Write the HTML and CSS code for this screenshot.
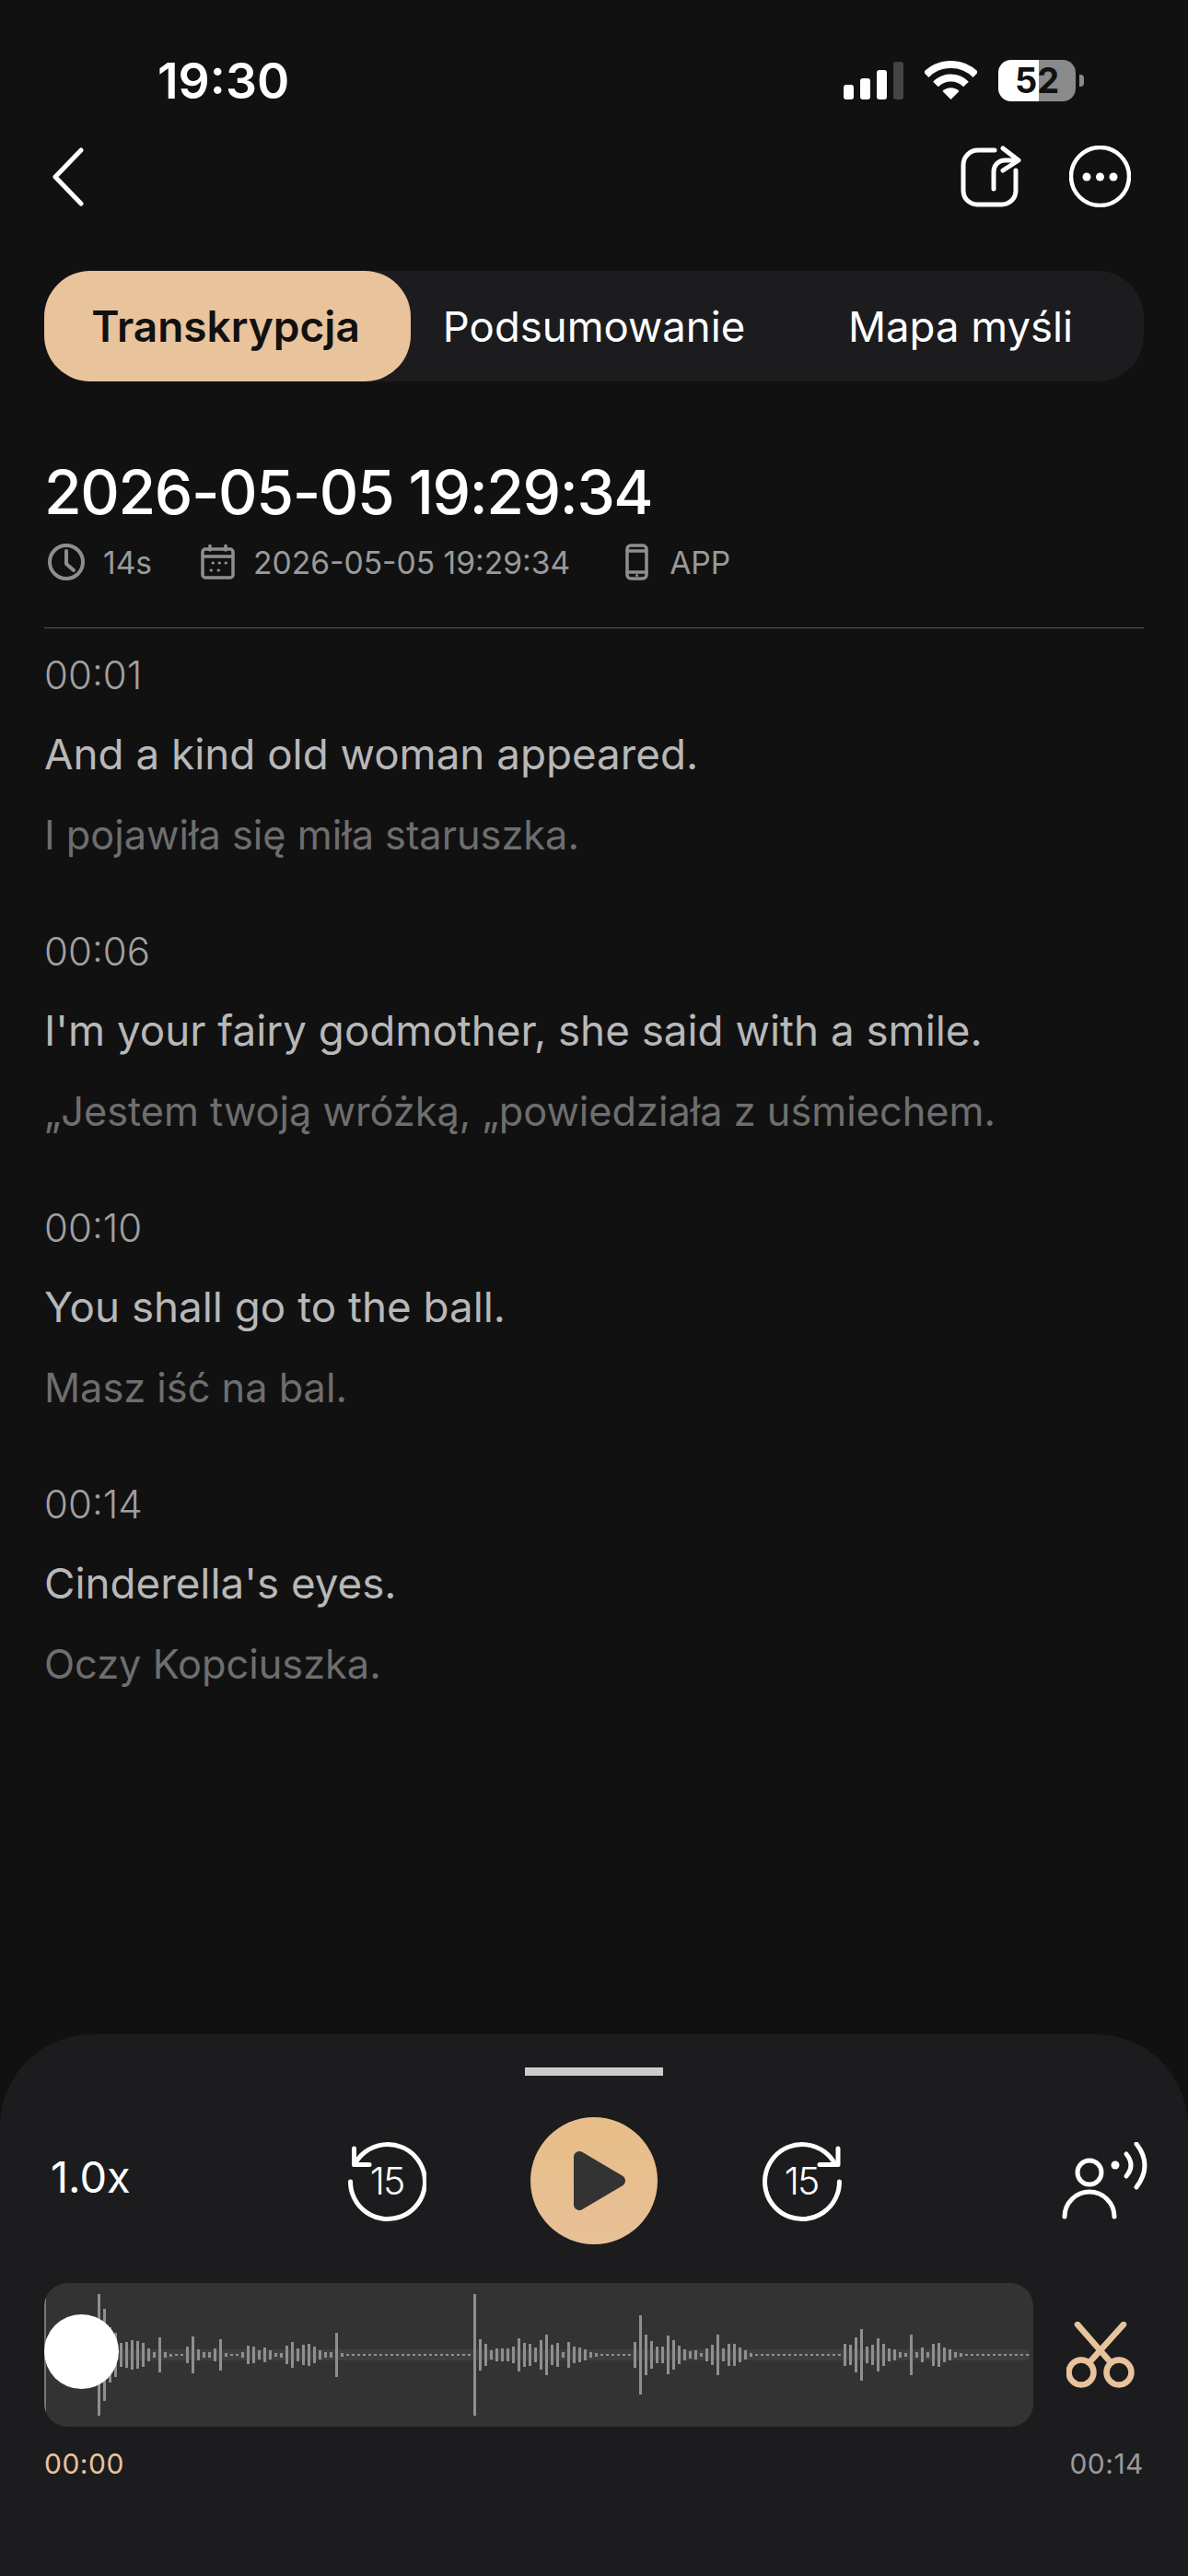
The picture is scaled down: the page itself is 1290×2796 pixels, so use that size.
FILE: index.html
```html
<!DOCTYPE html>
<html lang="pl">
<head>
  <meta charset="UTF-8">
  <title>Transkrypcja</title>
  <link rel="stylesheet" href="styles.css">
</head>
<body>

<div class="statusbar">
  <span class="clock">19:30</span>
  <div class="status-icons">
    <div class="signal">
      <i class="s1"></i><i class="s2"></i><i class="s3"></i><i class="s4"></i>
    </div>
    <svg class="wifi" width="57" height="42" viewBox="0 0 57 42">
      <path d="M1.6 15.1a38 38 0 0 1 53.8 0" fill="none" stroke="#fff" stroke-width="8"/>
      <path d="M12 25.5a23 23 0 0 1 33 0" fill="none" stroke="#fff" stroke-width="8"/>
      <path d="M19.5 33a12.700 12.700 0 0 1 18 0l-9 9z" fill="#fff"/>
    </svg>
    <div class="battery"><span>52</span></div>
    <div class="battery-nub"></div>
  </div>
</div>

<div class="topbar">
  <svg width="34" height="64" viewBox="0 0 34 64">
    <path d="M31 3L3 32l28 29" fill="none" stroke="#fff" stroke-width="5" stroke-linecap="round" stroke-linejoin="round"/>
  </svg>
  <div class="topbar-right">
    <svg width="67" height="67" viewBox="0 0 67 67" fill="none" stroke="#fff" stroke-width="5" stroke-linecap="round" stroke-linejoin="round">
      <path d="M38 5H20A16 16 0 0 0 4 21V49a15 15 0 0 0 15 15H46a15 15 0 0 0 15-15V27"/>
      <path d="M37 47V28a12 12 0 0 1 12-12H63"/>
      <path d="M47 3L64 16L47 27"/>
    </svg>
    <svg width="67" height="67" viewBox="0 0 67 67">
      <circle cx="33.500" cy="33.500" r="31.500" fill="none" stroke="#fff" stroke-width="4.500"/>
      <circle cx="19" cy="34" r="4.500" fill="#fff"/>
      <circle cx="33.500" cy="34" r="4.500" fill="#fff"/>
      <circle cx="48" cy="34" r="4.500" fill="#fff"/>
    </svg>
  </div>
</div>

<div class="tabs">
  <div class="tab active">Transkrypcja</div>
  <div class="tab">Podsumowanie</div>
  <div class="tab">Mapa myśli</div>
</div>

<h1 class="title">2026-05-05 19:29:34</h1>

<div class="meta">
  <svg class="ic-clock" width="40" height="40" viewBox="0 0 40 40" fill="none" stroke="#8e8e8e" stroke-width="4" stroke-linecap="round" stroke-linejoin="round">
    <circle cx="20" cy="20" r="18"/>
    <path d="M20 8V22L28 29"/>
  </svg>
  <span class="meta-dur">14s</span>
  <svg class="ic-cal" width="37" height="38" viewBox="0 0 37 38" fill="none" stroke="#8e8e8e" stroke-width="3.500" stroke-linecap="round">
    <rect x="2" y="5" width="33" height="31" rx="3"/>
    <path d="M2 13H35M10 1.500V6M27 1.500V6"/>
    <path d="M13 20h.5M20 20h.5M27 20h.5M11 28h.5M19 28h.5" stroke-width="3"/>
  </svg>
  <span class="meta-date">2026-05-05 19:29:34</span>
  <svg class="ic-phone" width="25" height="40" viewBox="0 0 25 40" fill="none" stroke="#8e8e8e" stroke-width="3.500" stroke-linecap="round">
    <rect x="2" y="2" width="21" height="36" rx="4"/>
    <path d="M2 8H23M2 31H23"/>
    <path d="M12.500 34.500h.1" stroke-width="3"/>
  </svg>
  <span class="meta-app">APP</span>
</div>

<div class="divider"></div>

<div class="transcript">
  <div class="item">
    <div class="ts">00:01</div>
    <div class="en">And a kind old woman appeared.</div>
    <div class="pl">I pojawiła się miła staruszka.</div>
  </div>
  <div class="item">
    <div class="ts">00:06</div>
    <div class="en">I'm your fairy godmother, she said with a smile.</div>
    <div class="pl">„Jestem twoją wróżką, „powiedziała z uśmiechem.</div>
  </div>
  <div class="item">
    <div class="ts">00:10</div>
    <div class="en">You shall go to the ball.</div>
    <div class="pl">Masz iść na bal.</div>
  </div>
  <div class="item">
    <div class="ts">00:14</div>
    <div class="en">Cinderella's eyes.</div>
    <div class="pl">Oczy Kopciuszka.</div>
  </div>
</div>

<div class="sheet">
  <div class="handle"></div>

  <div class="controls">
    <div class="speed">1.0x</div>
    <div class="transport">
      <svg width="88" height="90" viewBox="0 0 88 90" fill="none" stroke="#fff" stroke-width="5" stroke-linecap="round" stroke-linejoin="round">
        <path d="M5.500 46A40.500 40.500 0 1 0 10 27.500"/>
        <path d="M9.500 10V27.500H26"/>
        <text class="skip-num" x="45" y="60" text-anchor="middle">15</text>
      </svg>
      <div class="play">
        <svg width="138" height="138" viewBox="0 0 138 138">
          <polygon points="53,43 97,69 53,95" fill="#333" stroke="#333" stroke-width="12" stroke-linejoin="round"/>
        </svg>
      </div>
      <svg width="88" height="90" viewBox="0 0 88 90" fill="none" stroke="#fff" stroke-width="5" stroke-linecap="round" stroke-linejoin="round">
        <path d="M84.500 46A40.500 40.500 0 1 1 80 27.500"/>
        <path d="M83 10V27.500H63"/>
        <text class="skip-num" x="43" y="60" text-anchor="middle">15</text>
      </svg>
    </div>
    <svg class="voice" width="93" height="84" viewBox="0 0 93 84" fill="none" stroke="#fff" stroke-width="5" stroke-linecap="round">
      <circle cx="30" cy="33" r="13"/>
      <path d="M3 81a27 27 0 0 1 54 0"/>
      <circle cx="58" cy="25" r="4.500" fill="#fff" stroke="none"/>
      <path d="M70 13q10 12 0 24"/>
      <path d="M81 2q18 23 0 47"/>
    </svg>
  </div>

  <div class="wave-row">
    <div class="wave">
      <div class="band"></div>
      <div class="bars" id="bars"></div>
      <div class="playhead"></div>
      <div class="thumb"></div>
    </div>
    <svg width="74" height="72" viewBox="0 0 74 72" fill="none" stroke="#e8c39b" stroke-width="6.500" stroke-linecap="round">
      <circle cx="16" cy="55" r="13.500"/>
      <circle cx="57" cy="55" r="13.500"/>
      <path d="M12 3L47 43"/>
      <path d="M62 3L26 43"/>
    </svg>
  </div>

  <div class="times">
    <span class="now">00:00</span>
    <span>00:14</span>
  </div>
</div>

<script>
  // half heights of the waveform bars, 1 = flat dash
  function dashes(n) {
    return new Array(n).fill(1);
  }

  const samples = [
    66, 50, 30, 24, 13, 14, 16, 15, 13, 7, 3, 19, 3, 1.5, 1, 1,
    9, 20, 6, 3, 3, 7, 17, 2, 1, 1,
    3, 10, 9, 5, 8, 5, 2, 2.5, 10, 14, 7, 11, 12, 9, 5, 3, 3, 24, 2,
    ...dashes(23),
    66, 17, 12, 5, 7, 7, 7, 9, 18, 13, 12, 8, 16, 22, 11, 13, 3, 14, 9, 8, 6, 3, 2,
    ...dashes(6),
    14, 43, 22, 15, 9, 9, 21, 16, 10, 6, 4, 5, 2, 7, 11, 22, 7, 12, 12, 8, 5, 2,
    ...dashes(16),
    12, 11, 19, 28, 9, 11, 18, 12, 7, 6, 3, 2, 22, 3, 8, 3, 12, 13, 8, 6, 3, 2,
    ...dashes(12)
  ];

  const bars = document.getElementById("bars");
  samples.forEach(h => {
    const bar = document.createElement("span");
    bar.style.height = (h * 2) + "px";
    bars.appendChild(bar);
  });
</script>
</body>
</html>
```

FILE: styles.css
```css
* {
  box-sizing: border-box;
}

body {
  margin: 0;
  width: 1290px;
  height: 2796px;
  overflow: hidden;
  display: flex;
  flex-direction: column;
  background-color: #111112;
  color: #fff;
  font-family: Inter, "Noto Sans", sans-serif;
}

svg {
  display: block;
  flex-shrink: 0;
}

.statusbar {
  height: 46px;
  margin-top: 64px;
  padding: 0 113px 0 171px;
  display: flex;
  justify-content: space-between;
  align-items: center;
}

.clock {
  font-size: 53.500px;
  font-weight: 600;
}

.status-icons {
  display: flex;
  align-items: center;
}

.signal {
  display: flex;
  align-items: flex-end;
  gap: 7px;
  height: 41px;
  margin-right: 23px;
}

.signal i {
  width: 11px;
  background-color: #fff;
  border-radius: 3px;
}

.signal .s1 { height: 16px; }
.signal .s2 { height: 23px; }
.signal .s3 { height: 32px; }
.signal .s4 { height: 41px; background-color: #444; }

.wifi {
  margin-right: 23px;
}

.battery {
  width: 84px;
  height: 45px;
  border-radius: 14px;
  background: linear-gradient(90deg, #fff 52.500%, #8a8a8a 52.500%);
  display: flex;
  justify-content: center;
  align-items: center;
  color: #111;
  font-size: 38px;
  font-weight: 700;
}

.battery-nub {
  width: 5px;
  height: 13px;
  margin-left: 4px;
  background-color: #8a8a8a;
  border-radius: 0 4px 4px 0;
}

.topbar {
  margin-top: 48px;
  padding: 0 62px 0 57px;
  height: 67px;
  display: flex;
  justify-content: space-between;
  align-items: center;
}

.topbar-right {
  display: flex;
  gap: 52px;
}

.tabs {
  margin: 69px 48px 0;
  height: 120px;
  display: grid;
  grid-template-columns: repeat(3, 1fr);
  background-color: #1c1c1f;
  border-radius: 50px;
}

.tab {
  display: flex;
  justify-content: center;
  align-items: center;
  font-size: 45.500px;
  border-radius: 50px;
}

.tab.active {
  padding-right: 4px;
  background-color: #e8c39b;
  color: #111;
  font-size: 46px;
  font-weight: 600;
}

.title {
  margin: 74px 48px 0;
  font-size: 66px;
  font-weight: 500;
  line-height: 92px;
  letter-spacing: -1.4px;
}

.meta {
  margin: 10px 48px 0 52px;
  height: 40px;
  display: flex;
  align-items: center;
  color: #9a9a9a;
  font-size: 33.600px;
}

.meta-dur { margin-left: 20px; }
.ic-cal { margin-left: 53px; }
.meta-date { margin-left: 20px; }
.ic-phone { margin-left: 60px; }
.meta-app { margin-left: 23px; }

.divider {
  height: 1px;
  margin: 51px 48px 0;
  background-color: #555;
}

.transcript {
  margin: 21px 48px 0;
}

.item {
  margin-bottom: 53px;
}

.ts {
  line-height: 60px;
  margin-bottom: 13px;
  font-size: 42px;
  font-weight: 300;
  color: #a0a0a0;
}

.en {
  line-height: 86px;
  font-size: 45.750px;
  color: #b8b8b8;
}

.pl {
  line-height: 88px;
  font-size: 43.300px;
  color: #6e6e6e;
}

.sheet {
  margin-top: auto;
  height: 588px;
  background-color: #1c1c1e;
  border-radius: 100px 100px 0 0;
  padding-top: 36px;
}

.handle {
  width: 150px;
  height: 9px;
  margin: 0 auto;
  background-color: #ccc;
}

.controls {
  margin-top: 45px;
  padding: 0 44px;
  height: 138px;
  display: grid;
  grid-template-columns: 1fr auto 1fr;
  align-items: center;
}

.speed {
  margin: 0 0 10px 11px;
  font-size: 47px;
}

.transport {
  display: flex;
  align-items: center;
  gap: 113px;
}

.skip-num {
  fill: #fff;
  stroke: none;
  font-size: 41px;
  font-weight: 300;
  letter-spacing: -2px;
}

.play {
  width: 138px;
  height: 138px;
  border-radius: 50%;
  background: linear-gradient(180deg, #e8bd88, #e8c096);
}

.voice {
  justify-self: end;
}

.wave-row {
  margin: 42px 0 0 48px;
  display: flex;
  align-items: center;
  gap: 36px;
}

.wave {
  position: relative;
  width: 1074px;
  height: 156px;
  background-color: #333;
  border-radius: 25px;
  overflow: hidden;
}

.band {
  position: absolute;
  left: 0;
  right: 3px;
  top: 72px;
  height: 12px;
  background-color: #3f3f3f;
  border-radius: 6px;
}

.bars {
  position: relative;
  height: 100%;
  padding-left: 58px;
  display: flex;
  align-items: center;
  gap: 3px;
}

.bars span {
  flex: 0 0 3px;
  background-color: #8f8f8f;
}

.playhead {
  position: absolute;
  left: 0;
  top: 16px;
  width: 2px;
  height: 124px;
  background-color: #777;
}

.thumb {
  position: absolute;
  left: 0;
  top: 34px;
  width: 81px;
  height: 81px;
  border-radius: 50%;
  background-color: #fff;
}

.times {
  margin-top: 20px;
  padding: 0 48px;
  display: flex;
  justify-content: space-between;
  font-size: 30px;
  line-height: 40px;
  letter-spacing: 0.5px;
  color: #9a9a9a;
}

.now {
  color: #e8c39b;
}
```
